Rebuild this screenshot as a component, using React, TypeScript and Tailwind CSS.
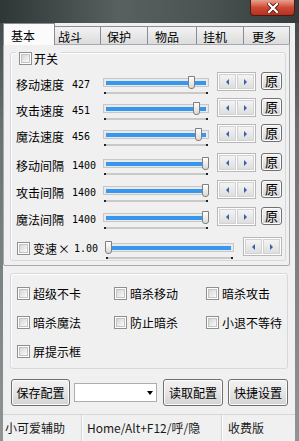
import React from "react";

const rows = [
  { label: "移动速度", value: "427", pos: 85, mt: "mt-0" },
  { label: "攻击速度", value: "451", pos: 90, mt: "mt-[6px]" },
  { label: "魔法速度", value: "456", pos: 92, mt: "mt-[6px]" },
  { label: "移动间隔", value: "1400", pos: 99, mt: "mt-[9px]" },
  { label: "攻击间隔", value: "1400", pos: 99, mt: "mt-[7px]" },
  { label: "魔法间隔", value: "1400", pos: 99, mt: "mt-[7px]" },
];

const tabs = [
  { name: "战斗", cls: "w-[46px] pl-[3px]" },
  { name: "保护", cls: "w-[47px] pl-[6px]" },
  { name: "物品", cls: "w-[49px] pl-[7px]" },
  { name: "挂机", cls: "w-[47px] pl-[6px]" },
  { name: "更多", cls: "w-[46px] pl-[8px]" },
];

const options = ["超级不卡", "暗杀移动", "暗杀攻击", "暗杀魔法", "防止暗杀", "小退不等待", "屏提示框"];

const Check = () => (
  <div className="w-[13px] h-[13px] shrink-0 border border-[#8f8f8f] bg-white p-px">
    <div className="w-full h-full border border-[#c4c4c4] bg-gradient-to-br from-[#d6d6d6] to-[#fafafa]" />
  </div>
);

const Slider = ({ pos, className }: { pos: number; className: string }) => (
  <div className={`relative shrink-0 ${className}`}>
    <div className="h-[9px] border border-[#c7c7c7] bg-[#e9e9e9] flex items-center px-[2px]">
      <div className="h-[4px] w-full bg-[#3797ef]" />
    </div>
    <div className="mt-[5px] mx-px h-[2px] bg-[#c9c9c9] flex justify-between">
      <div className="w-[2px] h-[2px] bg-[#222]" />
      <div className="w-[2px] h-[2px] bg-[#222]" />
    </div>
    <div
      className="absolute top-[-2px] w-[7px] h-[13px] border border-[#7f7f7f] rounded-b-[3px] bg-gradient-to-b from-white to-[#d9d9d9]"
      style={{ left: pos }}
    />
  </div>
);

const Nudge = () => (
  <div className="flex w-[39px] h-[19px] shrink-0 border border-[#b8b8b8] bg-white p-px gap-px">
    <div className="flex-1 flex items-center justify-center border border-[#d2d2d2] bg-gradient-to-b from-[#f4f4f4] to-[#dedede]">
      <div className="w-0 h-0 border-y-[3px] border-y-transparent border-r-[3px] border-r-[#3b5fa8]" />
    </div>
    <div className="flex-1 flex items-center justify-center border border-[#d2d2d2] bg-gradient-to-b from-[#f4f4f4] to-[#dedede]">
      <div className="w-0 h-0 border-y-[3px] border-y-transparent border-l-[3px] border-l-[#3b5fa8]" />
    </div>
  </div>
);

const Btn = ({ children, className }: { children: React.ReactNode; className: string }) => (
  <div
    className={`shrink-0 flex items-center justify-center border border-[#707070] rounded-[3px] bg-gradient-to-b from-[#f2f2f2] via-[#e6e6e6] to-[#d2d2d2] shadow-[inset_0_0_0_1px_#fcfcfc] ${className}`}
  >
    {children}
  </div>
);

export default function App() {
  return (
    <div className="w-[299px] h-[441px] overflow-hidden flex flex-col bg-[linear-gradient(180deg,#3c4443,#6b7372_30%,#8e9594)] font-['Noto_Sans_CJK_SC',sans-serif] text-[12px] leading-[12px] text-black">
      <div className="h-[23px] shrink-0 flex justify-end pr-[4px] bg-[linear-gradient(90deg,#2f3736,#58615f_40%,#4a5352_70%,#343b3a)]">
        <div className="w-[45px] h-[16px] border border-t-0 border-[#4a1b16] rounded-b-[4px] bg-gradient-to-b from-[#e7a090] via-[#cc4a35] to-[#b8301c] flex items-center justify-center">
          <svg width="12" height="10" viewBox="0 0 12 10">
            <path d="M2 1 L10 9 M10 1 L2 9" stroke="#5a1a12" strokeWidth="4" strokeLinecap="square" />
            <path d="M2 1 L10 9 M10 1 L2 9" stroke="#ffffff" strokeWidth="2.2" strokeLinecap="square" />
          </svg>
        </div>
      </div>

      <div className="flex-1 ml-[3px] w-[292px] bg-[#f0f0f0] flex flex-col">
        <div className="h-[21px] flex items-end relative z-10">
          <div className="w-[52px] h-[22px] -mb-px pl-[7px] pt-[6px] border border-b-0 border-[#898c95] bg-[#fbfbfb]">基本</div>
          {tabs.map((t) => (
            <div
              key={t.name}
              className={`h-[18px] pt-[4px] border border-b-0 border-l-0 border-[#898c95] bg-gradient-to-b from-[#f3f3f3] to-[#dcdcdc] ${t.cls}`}
            >
              {t.name}
            </div>
          ))}
        </div>

        <div className="w-[287px] h-[222px] border border-[#a6a9b0] rounded-b-[2px] pl-[6px] pt-[7px]">
          <div className="w-[276px] h-[209px] border border-[#d3d9dd] rounded-[3px] shadow-[inset_1px_1px_0_#ffffff] pl-[5px]">
            <div className="-mt-px flex items-center gap-[2px] w-fit h-[13px] bg-[#f0f0f0] pl-[3px] pr-[3px]">
              <Check />
              <span>开关</span>
            </div>

            <div className="mt-[7px] flex flex-col">
              {rows.map((r) => (
                <div key={r.label} className={`flex items-start h-[20px] ${r.mt}`}>
                  <span className="w-[56px] mt-[7px]">{r.label}</span>
                  <span className="w-[31px] mt-[8px] font-['DejaVu_Sans_Mono',monospace] text-[10px] leading-[10px]">{r.value}</span>
                  <Slider pos={r.pos} className="w-[106px] mt-[6px]" />
                  <div className="ml-[8px]">
                    <Nudge />
                  </div>
                  <Btn className="ml-[5px] w-[21px] h-[18px] text-[13px]">原</Btn>
                </div>
              ))}

              <div className="flex items-start h-[20px] mt-[10px] pl-px">
                <div className="mt-[5px]">
                  <Check />
                </div>
                <span className="ml-[3px] mt-[6px]">变速</span>
                <span className="ml-px mt-[6px]">×</span>
                <span className="ml-[4px] w-[31px] mt-[7px] font-['DejaVu_Sans_Mono',monospace] text-[10px] leading-[10px]">1.00</span>
                <Slider pos={0} className="w-[129px] mt-[6px]" />
                <div className="ml-[9px]">
                  <Nudge />
                </div>
              </div>
            </div>
          </div>
        </div>

        <div className="ml-[7px] mt-[7px] w-[278px] h-[96px] border border-[#d3d9dd] rounded-[3px] shadow-[inset_1px_1px_0_#ffffff] pl-[6px] pt-[13px] grid grid-cols-[97px_92px_1fr] gap-y-[16px] content-start">
          {options.map((o) => (
            <div key={o} className="flex items-center gap-[3px] h-[13px]">
              <Check />
              <span>{o}</span>
            </div>
          ))}
        </div>

        <div className="mt-[10px] ml-[8px] flex items-center h-[27px]">
          <Btn className="w-[59px] h-[27px]">保存配置</Btn>
          <div className="ml-[4px] w-[83px] h-[19px] border border-[#abadb3] bg-white flex items-center justify-end pr-[3px]">
            <div className="w-0 h-0 border-x-[3px] border-x-transparent border-t-[4px] border-t-black" />
          </div>
          <Btn className="ml-[6px] w-[60px] h-[27px]">读取配置</Btn>
          <Btn className="ml-[5px] w-[60px] h-[27px]">快捷设置</Btn>
        </div>

        <div className="mt-[8px] flex-1 border-t border-[#d7d7d7] flex items-center text-[#1a1a1a]">
          <div className="w-[79px] h-full flex items-center pl-[2px] border-r border-[#d5d5d5]">小可爱辅助</div>
          <div className="w-[140px] h-full flex items-center pl-[4px] border-r border-[#d5d5d5] border-l border-l-white">Home/Alt+F12/呼/隐</div>
          <div className="flex-1 h-full flex items-center pl-[5px] border-l border-l-white">收费版</div>
        </div>
      </div>
    </div>
  );
}
